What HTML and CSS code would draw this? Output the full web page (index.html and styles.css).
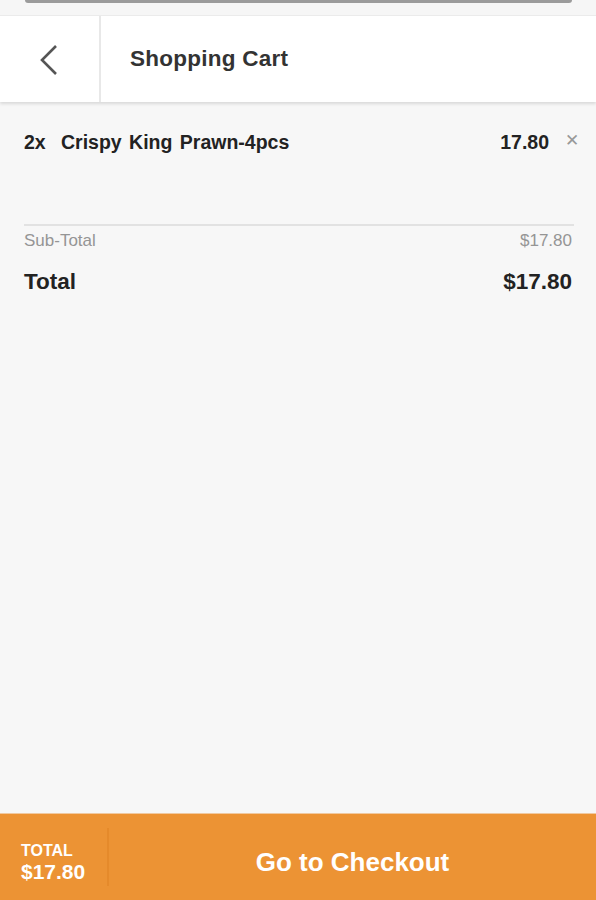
FILE: index.html
```html
<!DOCTYPE html>
<html lang="en">
<head>
	<meta charset="UTF-8">
	<title>Shopping Cart</title>
	<link rel="stylesheet" href="styles.css">
</head>
<body>
	<div id="page">
		<div class="topstrip">
			<div class="topstrip-bar"></div>
		</div>
		<div class="header">
			<div class="back">
				<svg width="20" height="32" viewBox="0 0 20 32"><path d="M17 2 L3 16 L17 30" fill="none" stroke="#555" stroke-width="2.6"/></svg>
			</div>
			<div class="title">Shopping Cart</div>
		</div>
		<div class="content">
			<div class="item">
				<span class="qty">2x</span>
				<span class="name">Crispy King Prawn-4pcs</span>
				<span class="price">17.80</span>
				<span class="remove">&#x2715;</span>
			</div>
			<div class="sums">
				<div class="row sub">
					<span>Sub-Total</span>
					<span>$17.80</span>
				</div>
				<div class="row total">
					<span>Total</span>
					<span>$17.80</span>
				</div>
			</div>
		</div>
		<div class="footer">
			<div class="foot-total">
				<span class="foot-label">TOTAL</span>
				<span class="foot-amount">$17.80</span>
			</div>
			<div class="checkout">Go to Checkout</div>
		</div>
	</div>
</body>
</html>
```

FILE: styles.css
```css
*{
	margin: 0;
	padding: 0;
	box-sizing: border-box;
}
body{
	font-family: "Liberation Sans", Arial, sans-serif;
	background: #f7f7f7;
	color: #222;
}
#page{
	height: 900px;
	display: flex;
	flex-direction: column;
}
/*顶部条*/
.topstrip{
	height: 16px;
	background: #f6f6f6;
	padding: 0 24px 0 25px;
	border-bottom: 1px solid #ececec;
}
.topstrip-bar{
	height: 3px;
	background: #9b9b9b;
	border-radius: 0 0 3px 3px;
}
/*标题栏*/
.header{
	height: 86px;
	background: #fff;
	display: flex;
	box-shadow: 0 2px 3px rgba(0,0,0,0.12);
	position: relative;
}
.back{
	width: 101px;
	border-right: 2px solid #e8e8e8;
	display: flex;
	align-items: center;
	padding-left: 39px;
	padding-top: 1px;
}
.title{
	display: flex;
	align-items: center;
	padding-left: 29px;
	font-size: 22.5px;
	letter-spacing: 0.25px;
	font-weight: bold;
	color: #333;
}
/*内容*/
.content{
	flex: 1;
	padding: 0 22px 0 24px;
}
.item{
	display: flex;
	align-items: flex-start;
	height: 124px;
	padding-top: 29px;
	font-size: 19.5px;
	font-weight: bold;
	color: #222;
	border-bottom: 2px solid #e2e2e2;
}
.qty{
	width: 37px;
}
.name{
	flex: 1;
	word-spacing: 2px;
}
.price{
	margin-right: 16px;
}
.remove{
	font-size: 17px;
	font-weight: normal;
	color: #999;
	position: relative;
	top: -1px;
	margin-right: -5px;
}
.sums{
	padding-right: 2px;
}
.row{
	display: flex;
	justify-content: space-between;
}
.sub{
	font-size: 17px;
	color: #959595;
	margin-top: 5px;
}
.total{
	font-size: 22.5px;
	font-weight: bold;
	color: #222;
	margin-top: 18px;
}
/*底部*/
.footer{
	height: 87px;
	background: #ec9334;
	border-top: 1px solid #f0c9a0;
	display: flex;
	color: #fff;
}
.foot-total{
	width: 109px;
	border-right: 2px solid #e58a2b;
	display: flex;
	flex-direction: column;
	justify-content: center;
	padding-left: 21px;
	padding-top: 10px;
	margin: 14px 0;
	font-weight: bold;
}
.foot-label{
	font-size: 16px;
	line-height: 19px;
}
.foot-amount{
	font-size: 21px;
	line-height: 23px;
}
.checkout{
	flex: 1;
	display: flex;
	align-items: center;
	justify-content: center;
	font-size: 26px;
	font-weight: bold;
	padding-top: 10px;
}
```
